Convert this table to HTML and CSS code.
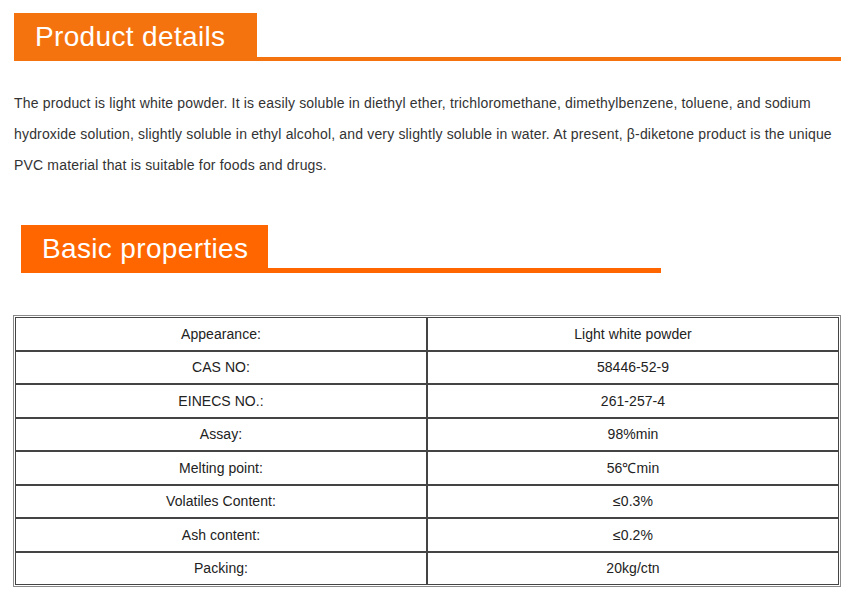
FILE: index.html
```html
<!DOCTYPE html>
<html lang="en">
<head>
<meta charset="utf-8">
<title>Product details</title>
<link rel="stylesheet" href="styles.css">
</head>
<body>
<div class="page">
  <div class="title title-product">
    <h2 class="title-box">Product details</h2>
    <span class="title-line"></span>
  </div>
  <p class="desc">The product is light white powder. It is easily soluble in diethyl ether, trichloromethane, dimethylbenzene, toluene, and sodium hydroxide solution, slightly soluble in ethyl alcohol, and very slightly soluble in water. At present, β-diketone product is the unique PVC material that is suitable for foods and drugs.</p>

  <div class="title title-basic">
    <h2 class="title-box">Basic properties</h2>
    <span class="title-line"></span>
  </div>

  <table class="props">
    <tbody>
      <tr><td>Appearance:</td><td>Light white powder</td></tr>
      <tr><td>CAS NO:</td><td>58446-52-9</td></tr>
      <tr><td>EINECS NO.:</td><td>261-257-4</td></tr>
      <tr><td>Assay:</td><td>98%min</td></tr>
      <tr><td>Melting point:</td><td>56℃min</td></tr>
      <tr><td>Volatiles Content:</td><td>≤0.3%</td></tr>
      <tr><td>Ash content:</td><td>≤0.2%</td></tr>
      <tr><td>Packing:</td><td>20kg/ctn</td></tr>
    </tbody>
  </table>
</div>
</body>
</html>
```

FILE: styles.css
```css
html, body {
  margin: 0;
  padding: 0;
  background: #fff;
}

body {
  font-family: "Liberation Sans", Arial, sans-serif;
  color: #333;
}

.page {
  padding: 13px 0 0 0;
}

.title {
  display: flex;
  align-items: flex-end;
}

.title-box {
  margin: 0;
  height: 48px;
  line-height: 48px;
  font-size: 28px;
  letter-spacing: 0.35px;
  font-weight: normal;
  color: #fff;
  box-sizing: border-box;
}

.title-line {
  display: block;
  height: 4px;
}

.title-product {
  margin-left: 14px;
  width: 827px;
}

.title-product .title-box {
  width: 243px;
  padding-left: 21px;
  background: #f5730f;
}

.title-product .title-line {
  flex: 1;
  background: #f5730f;
}

.title-basic {
  margin-left: 21px;
  margin-top: 44px;
  width: 640px;
}

.title-basic .title-box {
  width: 247px;
  padding-left: 21px;
  background: #ff6600;
}

.title-basic .title-line {
  flex: 1;
  height: 5px;
  background: #ff6600;
}

.desc {
  margin: 27px 0 0 14px;
  width: 827px;
  font-size: 14px;
  letter-spacing: 0.17px;
  line-height: 31px;
  color: #333;
}

.props {
  margin: 42px 0 0 13px;
  width: 828px;
  table-layout: fixed;
  border-collapse: separate;
  border-spacing: 0;
  border: 1px solid #8a8a8a;
  padding: 1px;
  box-sizing: border-box;
}

.props td {
  width: 50%;
  height: 31.5px;
  padding: 0;
  border: 1px solid #444;
  text-align: center;
  vertical-align: middle;
  font-size: 14px;
  letter-spacing: 0.05px;
  color: #222;
}
```
